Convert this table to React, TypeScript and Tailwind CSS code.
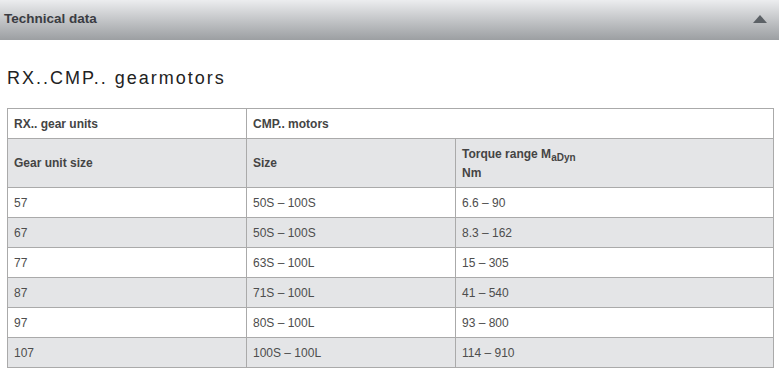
import React from "react";

const rows: [string, string, string][] = [
  ["57", "50S – 100S", "6.6 – 90"],
  ["67", "50S – 100S", "8.3 – 162"],
  ["77", "63S – 100L", "15 – 305"],
  ["87", "71S – 100L", "41 – 540"],
  ["97", "80S – 100L", "93 – 800"],
  ["107", "100S – 100L", "114 – 910"],
];

const cell = "border border-[#aaaaaa] px-[6px] align-middle text-left";

export default function App() {
  return (
    <div className="w-[779px] h-[372px] bg-white overflow-hidden font-['Liberation_Sans',Arial,sans-serif]">
      <div className="h-[40px] flex items-center justify-between pl-[4px] pr-[12px] bg-gradient-to-b from-[#ecedef] to-[#9c9fa2]">
        <span className="text-[13.5px] font-bold text-[#3a3c42] -mt-[2px]">Technical data</span>
        <svg width="14" height="8" viewBox="0 0 14 8" className="-mt-[2px]">
          <polygon points="7,0 14,8 0,8" fill="#5c6166" />
        </svg>
      </div>
      <div className="px-[7px]">
        <h2 className="mt-[25px] h-[43px] text-[18px] tracking-[2px] text-[#222]">RX..CMP.. gearmotors</h2>
        <table className="w-[767px] border-collapse text-[12px] text-[#4d4d4d]">
          <colgroup>
            <col className="w-[239px]" />
            <col className="w-[209px]" />
            <col />
          </colgroup>
          <thead>
            <tr className="h-[30px] bg-white">
              <th className={`${cell} font-bold text-[#444]`}>RX.. gear units</th>
              <th className={`${cell} font-bold text-[#444]`} colSpan={2}>
                CMP.. motors
              </th>
            </tr>
            <tr className="h-[49px] bg-[#e4e5e7]">
              <th className={`${cell} font-bold text-[#444]`}>Gear unit size</th>
              <th className={`${cell} font-bold text-[#444]`}>Size</th>
              <th className={`${cell} font-bold text-[#444] leading-[18px]`}>
                Torque range M<span className="relative top-[3px] text-[10px]">aDyn</span>
                <br />
                Nm
              </th>
            </tr>
          </thead>
          <tbody>
            {rows.map((r, i) => (
              <tr key={r[0]} className={`h-[30px] ${i % 2 ? "bg-[#e4e5e7]" : "bg-white"}`}>
                <td className={cell}>{r[0]}</td>
                <td className={cell}>{r[1]}</td>
                <td className={cell}>{r[2]}</td>
              </tr>
            ))}
          </tbody>
        </table>
      </div>
    </div>
  );
}
